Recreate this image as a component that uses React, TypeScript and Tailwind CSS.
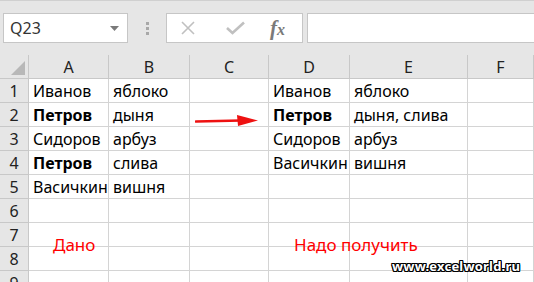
import React from 'react';

const cols = ['A', 'B', 'C', 'D', 'E', 'F'];

type Cell = { text?: string; bold?: boolean };

const rows: Cell[][] = [
  [{ text: 'Иванов' }, { text: 'яблоко' }, {}, { text: 'Иванов' }, { text: 'яблоко' }, {}],
  [{ text: 'Петров', bold: true }, { text: 'дыня' }, {}, { text: 'Петров', bold: true }, { text: 'дыня, слива' }, {}],
  [{ text: 'Сидоров' }, { text: 'арбуз' }, {}, { text: 'Сидоров' }, { text: 'арбуз' }, {}],
  [{ text: 'Петров', bold: true }, { text: 'слива' }, {}, { text: 'Васичкин' }, { text: 'вишня' }, {}],
  [{ text: 'Васичкин' }, { text: 'вишня' }, {}, {}, {}, {}],
  [{}, {}, {}, {}, {}, {}],
  [{}, {}, {}, {}, {}, {}],
  [{}, {}, {}, {}, {}, {}],
  [{}, {}, {}, {}, {}, {}],
];

function Toolbar() {
  return (
    <div className="h-[55px] bg-[#e6e6e6] border-t border-[#d0d0d0] flex items-start pt-[12px] pl-[3px]">
      {/* Name box */}
      <div className="w-[125px] h-[30px] bg-white border border-[#c6c6c6] flex items-center justify-between pl-[6px] pr-[8px]">
        <span className="text-[16px] text-[#333]">Q23</span>
        <svg width="9" height="5" viewBox="0 0 9 5">
          <path d="M0 0 L9 0 L4.5 5 Z" fill="#7a7a7a" />
        </svg>
      </div>
      <div className="w-[38px] h-[30px] flex flex-col items-center justify-center gap-[2px]">
        <span className="w-[3px] h-[3px] bg-[#a8a8a8]" />
        <span className="w-[3px] h-[3px] bg-[#a8a8a8]" />
        <span className="w-[3px] h-[3px] bg-[#a8a8a8]" />
      </div>
      {/* Cancel / enter / fx */}
      <div className="w-[137px] h-[30px] bg-white border border-[#c6c6c6] flex items-center">
        <svg className="ml-[14px]" width="14" height="14" viewBox="0 0 14 14">
          <path d="M1 1 L13 13 M13 1 L1 13" stroke="#c0c0c0" strokeWidth="1.6" />
        </svg>
        <svg className="ml-[31px]" width="19" height="14" viewBox="0 0 19 14">
          <path d="M1 7 L6.5 12 L18 1.5" stroke="#c0c0c0" strokeWidth="2.6" fill="none" />
        </svg>
        <span className="ml-[25px] text-[#7a7a7a] italic font-['Liberation_Serif',serif] text-[21px] font-bold leading-none">
          f<span className="text-[16px]">x</span>
        </span>
      </div>
      <div className="ml-[4px] flex-1 h-[30px] bg-white border border-r-0 border-[#c6c6c6]" />
    </div>
  );
}

export default function App() {
  return (
    <div className="w-[534px] h-[282px] overflow-hidden bg-white relative font-['Noto_Sans',sans-serif] text-black">
      <Toolbar />
      <div className="grid grid-cols-[29px_80px_81px_79px_81px_118px_66px] auto-rows-[24px]">
        {/* corner */}
        <div className="bg-[#e6e6e6] border-r border-b border-[#c8c8c8] flex items-end justify-end p-[3px]">
          <svg width="14" height="14" viewBox="0 0 14 14">
            <path d="M14 0 L14 14 L0 14 Z" fill="#b8b8b8" />
          </svg>
        </div>
        {cols.map((c) => (
          <div
            key={c}
            className="bg-[#e6e6e6] border-r border-b border-[#c8c8c8] flex items-center justify-center text-[16px] text-[#222] pt-[1px]"
          >
            {c}
          </div>
        ))}
        {rows.map((row, i) => (
          <React.Fragment key={i}>
            <div className="bg-[#e6e6e6] border-r border-b border-[#c8c8c8] flex items-center justify-center text-[16px] text-[#222] pt-[1px]">
              {i + 1}
            </div>
            {row.map((cell, j) => (
              <div
                key={j}
                className={
                  'border-r border-b border-[#d4d4d4] flex items-center pl-[4px] pt-[1px] text-[16px] whitespace-nowrap ' +
                  (cell.bold ? 'font-bold' : '')
                }
              >
                {cell.text}
              </div>
            ))}
          </React.Fragment>
        ))}
      </div>

      {/* red arrow */}
      <svg className="absolute left-[195px] top-[113px]" width="64" height="16" viewBox="0 0 64 16">
        <path d="M1 8.5 L46 7.5" stroke="#ee1111" strokeWidth="2.6" strokeLinecap="round" />
        <path d="M42 2 L63 7.5 L43 13 Z" fill="#ee1111" />
      </svg>

      <span className="absolute left-[53px] top-[232px] text-[17px] text-[#ff0000]">Дано</span>
      <span className="absolute left-[294px] top-[232px] text-[17px] text-[#ff0000]">Надо получить</span>
      <span className="absolute left-[392px] top-[257px] text-[13px] font-bold text-white tracking-[0.2px] [text-shadow:-1px_-1px_0_#000,1px_-1px_0_#000,-1px_1px_0_#000,1px_1px_0_#000,0_1px_0_#000,0_-1px_0_#000,1px_0_0_#000,-1px_0_0_#000]">
        www.excelworld.ru
      </span>
    </div>
  );
}
